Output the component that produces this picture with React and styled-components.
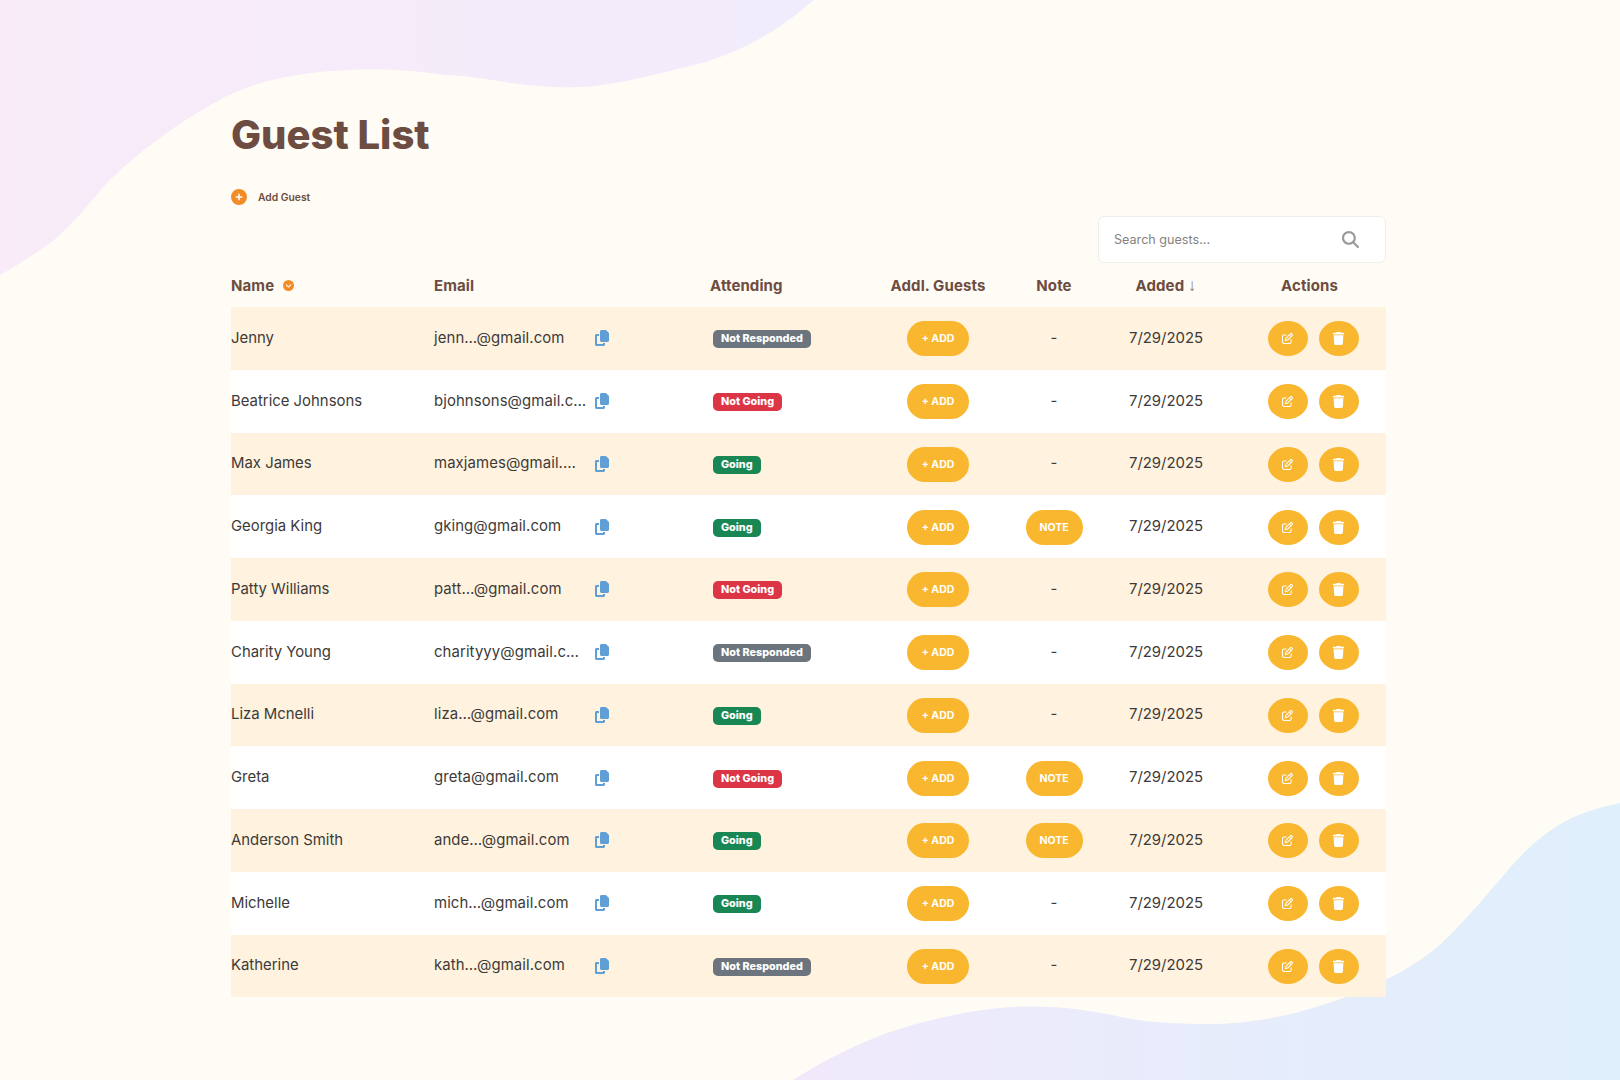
import React from 'react';
import styled, { createGlobalStyle } from 'styled-components';
import { FaCirclePlus, FaCircleChevronDown, FaCopy, FaRegPenToSquare, FaTrash, FaMagnifyingGlass } from 'react-icons/fa6';

const guests = [
  { name: 'Jenny', email: 'jenn…@gmail.com', status: 'Not Responded' },
  { name: 'Beatrice Johnsons', email: 'bjohnsons@gmail.c…', status: 'Not Going' },
  { name: 'Max James', email: 'maxjames@gmail.…', status: 'Going' },
  { name: 'Georgia King', email: 'gking@gmail.com', status: 'Going', note: true },
  { name: 'Patty Williams', email: 'patt…@gmail.com', status: 'Not Going' },
  { name: 'Charity Young', email: 'charityyy@gmail.c…', status: 'Not Responded' },
  { name: 'Liza Mcnelli', email: 'liza…@gmail.com', status: 'Going' },
  { name: 'Greta', email: 'greta@gmail.com', status: 'Not Going', note: true },
  { name: 'Anderson Smith', email: 'ande…@gmail.com', status: 'Going', note: true },
  { name: 'Michelle', email: 'mich…@gmail.com', status: 'Going' },
  { name: 'Katherine', email: 'kath…@gmail.com', status: 'Not Responded' },
];

const statusColors = {
  'Not Responded': '#6c757d',
  'Not Going': '#dc3545',
  Going: '#198754',
};

const GlobalStyle = createGlobalStyle`
  html, body {
    margin: 0;
    padding: 0;
    background: #fffcf5;
  }
  body {
    font-family: Inter, 'Noto Sans', sans-serif;
    color: #3d3a38;
  }
`;

const Page = styled.div`
  position: relative;
  min-height: 1080px;
  overflow: hidden;
`;

const Waves = styled.svg`
  position: absolute;
  top: 0;
  left: 0;
  width: 1620px;
  height: 1080px;
  pointer-events: none;
`;

const Container = styled.main`
  position: relative;
  width: 1155px;
  margin-left: 231px;
  padding-top: 110px;
`;

const Title = styled.h1`
  margin: 0 0 28px;
  font-size: 40px;
  line-height: 50px;
  font-weight: 800;
  color: #6d4c41;
`;

const AddGuestButton = styled.button`
  display: flex;
  align-items: center;
  gap: 11px;
  height: 18px;
  padding: 0;
  border: 0;
  background: none;
  font: 600 10.3px Inter, sans-serif;
  color: #6d4c41;
  cursor: pointer;

  svg {
    font-size: 16px;
    color: #f28c28;
  }
`;

const SearchRow = styled.div`
  display: flex;
  justify-content: flex-end;
  margin-top: 10px;
`;

const SearchBox = styled.label`
  display: flex;
  align-items: center;
  width: 288px;
  height: 47px;
  box-sizing: border-box;
  padding: 0 26px 0 15px;
  background: #fff;
  border: 1px solid #eeeeea;
  border-radius: 6px;

  svg {
    font-size: 17px;
    color: #9a9a9a;
  }
`;

const SearchInput = styled.input`
  flex: 1;
  min-width: 0;
  border: 0;
  outline: 0;
  background: none;
  padding: 0;
  font: 400 12.6px Inter, sans-serif;
  color: #333;

  &::placeholder {
    color: #85837f;
    opacity: 1;
  }
`;

const columns = '203px 276px 160px 136px 96px 128px 156px';

const HeaderRow = styled.div`
  display: grid;
  grid-template-columns: ${columns};
  align-items: center;
  height: 44px;
`;

const HeaderCell = styled.div`
  font-size: 15px;
  font-weight: 650;
  letter-spacing: 0.1px;
  color: #6d4c41;
  text-align: ${(p) => (p.$center ? 'center' : 'left')};
  padding-left: ${(p) => p.$inset || 0}px;
  display: ${(p) => (p.$inline ? 'flex' : 'block')};
  align-items: center;
  gap: 9px;
`;

const SortDot = styled(FaCircleChevronDown)`
  font-size: 11px;
  color: #f28c28;
`;

const SortArrow = styled.span`
  font: 400 17px/1 'Liberation Sans', sans-serif;
  color: #8a7a70;
`;

const Row = styled.div`
  display: grid;
  grid-template-columns: ${columns};
  align-items: center;
  height: 62.75px;
  background: ${(p) => (p.$odd ? '#fff3df' : '#ffffff')};
  font-size: 14.9px;
`;

const TextCell = styled.div`
  padding-bottom: 1px;
  letter-spacing: ${(p) => (p.$spaced ? '0.1px' : 'normal')};
`;

const EmailCell = styled.div`
  display: grid;
  grid-template-columns: 160px auto;
  justify-content: start;
  align-items: center;
`;

const CopyButton = styled.button`
  display: flex;
  padding: 0;
  border: 0;
  background: none;
  font-size: 16px;
  color: #609fd6;
  cursor: pointer;
`;

const StatusCell = styled.div`
  padding-left: 3px;
`;

const Badge = styled.span`
  display: inline-block;
  padding: 3px 8px;
  border-radius: 5px;
  background: ${(p) => statusColors[p.$status]};
  color: #fff;
  font-size: 10.8px;
  line-height: 12px;
  font-weight: 800;
`;

const Centered = styled.div`
  display: flex;
  justify-content: center;
  text-align: center;
  padding-top: ${(p) => (p.$button ? 1 : 0)}px;
  padding-bottom: ${(p) => (p.$button ? 0 : 1)}px;
`;

const Pill = styled.button`
  width: ${(p) => p.$width}px;
  height: 35px;
  padding: 0;
  border: 0;
  border-radius: 18px;
  background: #f9b730;
  color: #fff;
  font: 700 10.5px Inter, sans-serif;
  cursor: pointer;
`;

const Actions = styled.div`
  display: flex;
  justify-content: center;
  gap: 11px;
  padding: 1px 0 0 10px;
`;

const RoundButton = styled.button`
  display: flex;
  align-items: center;
  justify-content: center;
  width: 40px;
  height: 35px;
  padding: 0;
  border: 0;
  border-radius: 50%;
  background: #f9b730;
  color: #fff;
  font-size: ${(p) => p.$size}px;
  cursor: pointer;
`;

function GuestRow({ guest, odd }) {
  return (
    <Row $odd={odd}>
      <TextCell>{guest.name}</TextCell>
      <EmailCell>
        <TextCell $spaced>{guest.email}</TextCell>
        <CopyButton aria-label="Copy email"><FaCopy /></CopyButton>
      </EmailCell>
      <StatusCell>
        <Badge $status={guest.status}>{guest.status}</Badge>
      </StatusCell>
      <Centered $button><Pill $width={62}>+ ADD</Pill></Centered>
      <Centered $button={guest.note}>{guest.note ? <Pill $width={57}>NOTE</Pill> : '-'}</Centered>
      <Centered>7/29/2025</Centered>
      <Actions>
        <RoundButton $size={11} aria-label="Edit"><FaRegPenToSquare /></RoundButton>
        <RoundButton $size={13} aria-label="Delete"><FaTrash /></RoundButton>
      </Actions>
    </Row>
  );
}

export default function App() {
  return (
    <Page>
      <GlobalStyle />
      <Waves viewBox="0 0 1620 1080">
        <defs>
          <linearGradient id="waveTop" x1="0" y1="0" x2="1" y2="0">
            <stop offset="0" stopColor="#f9ebf8" />
            <stop offset="1" stopColor="#f1ecfc" />
          </linearGradient>
          <linearGradient id="waveBottom" x1="0" y1="0" x2="1" y2="0">
            <stop offset="0" stopColor="#f0e9fb" />
            <stop offset="1" stopColor="#dfeffb" />
          </linearGradient>
        </defs>
        <path
          fill="url(#waveTop)"
          d="M0 0 L814 0 C770 38 730 57 686 67 C640 78 600 90 552 87 C510 85 480 76 445 75 C415 71 385 68 348 70 C285 73 245 85 214 103 C170 128 135 155 107 183 C85 208 75 222 54 240 C38 252 18 265 0 275 Z"
        />
        <path
          fill="url(#waveBottom)"
          d="M1620 803 C1597 808 1576 814 1557 826 C1535 840 1520 856 1503 876 C1482 900 1470 915 1450 935 C1430 955 1410 968 1385 980 C1360 992 1340 1000 1316 1007 C1280 1018 1245 1024 1208 1024 C1170 1024 1140 1022 1112 1015 C1080 1008 1045 1005 1010 1007 C970 1010 925 1020 887 1033 C855 1045 825 1060 796 1078 L793 1080 L1620 1080 Z"
        />
      </Waves>
      <Container>
        <Title>Guest List</Title>
        <AddGuestButton><FaCirclePlus />Add Guest</AddGuestButton>
        <SearchRow>
          <SearchBox>
            <SearchInput placeholder="Search guests..." />
            <FaMagnifyingGlass />
          </SearchBox>
        </SearchRow>
        <HeaderRow>
          <HeaderCell $inline>Name <SortDot /></HeaderCell>
          <HeaderCell>Email</HeaderCell>
          <HeaderCell>Attending</HeaderCell>
          <HeaderCell $center>Addl. Guests</HeaderCell>
          <HeaderCell $center>Note</HeaderCell>
          <HeaderCell $center>Added <SortArrow>↓</SortArrow></HeaderCell>
          <HeaderCell $center $inset={3}>Actions</HeaderCell>
        </HeaderRow>
        {guests.map((guest, i) => (
          <GuestRow key={guest.name} guest={guest} odd={i % 2 === 0} />
        ))}
      </Container>
    </Page>
  );
}
